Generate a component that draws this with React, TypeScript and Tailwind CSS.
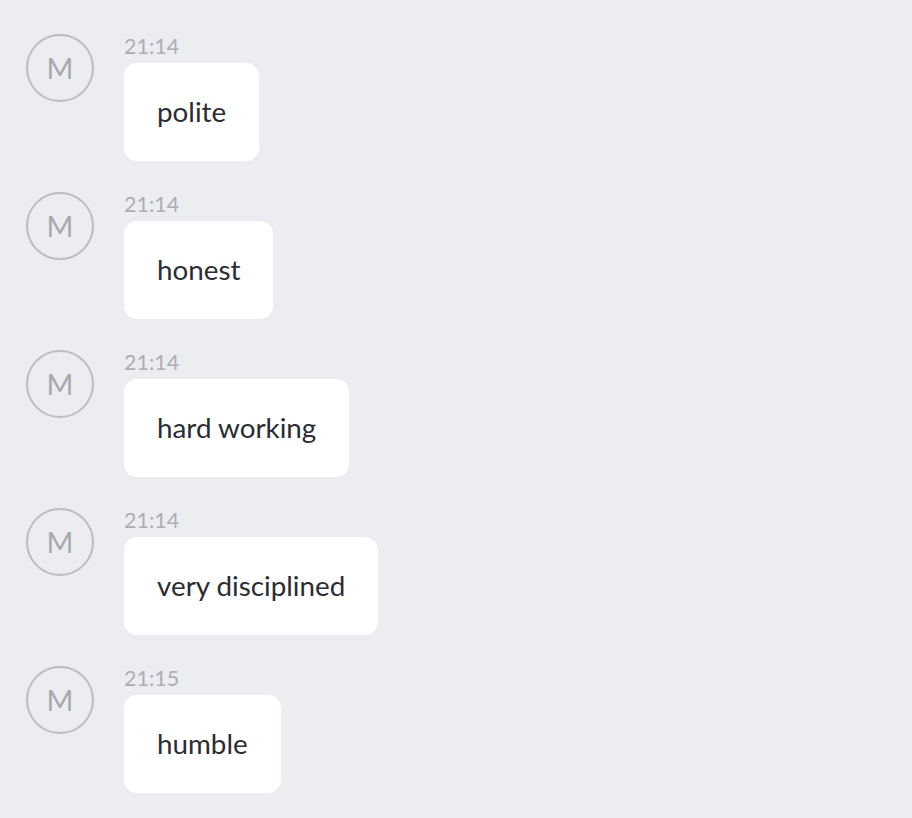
import React from "react";

const msgs = [
  { t: "21:14", text: "polite" },
  { t: "21:14", text: "honest" },
  { t: "21:14", text: "hard working" },
  { t: "21:14", text: "very disciplined" },
  { t: "21:15", text: "humble" },
];

export default function App() {
  return (
    <div
      className="w-[912px] h-[818px] bg-[#ecedf1] overflow-hidden pt-[34px] pl-[26px]"
      style={{ fontFamily: "Lato, 'Noto Sans', sans-serif" }}
    >
      <div className="flex flex-col gap-[31px]">
        {msgs.map((m, i) => (
          <div key={i} className="flex items-start gap-[30px]">
            <div className="w-[68px] h-[68px] rounded-full border-2 border-[#bdbdc1] flex items-center justify-center text-[29px] text-[#a9a9ad] shrink-0">
              M
            </div>
            <div className="flex flex-col items-start">
              <div className="h-[29px] text-[21.5px] leading-[24px] text-[#aeaeb2]">{m.t}</div>
              <div className="bg-white rounded-[13px] h-[98px] px-[33px] flex items-center text-[27.8px] text-[#2b2d33]">
                {m.text}
              </div>
            </div>
          </div>
        ))}
      </div>
    </div>
  );
}
